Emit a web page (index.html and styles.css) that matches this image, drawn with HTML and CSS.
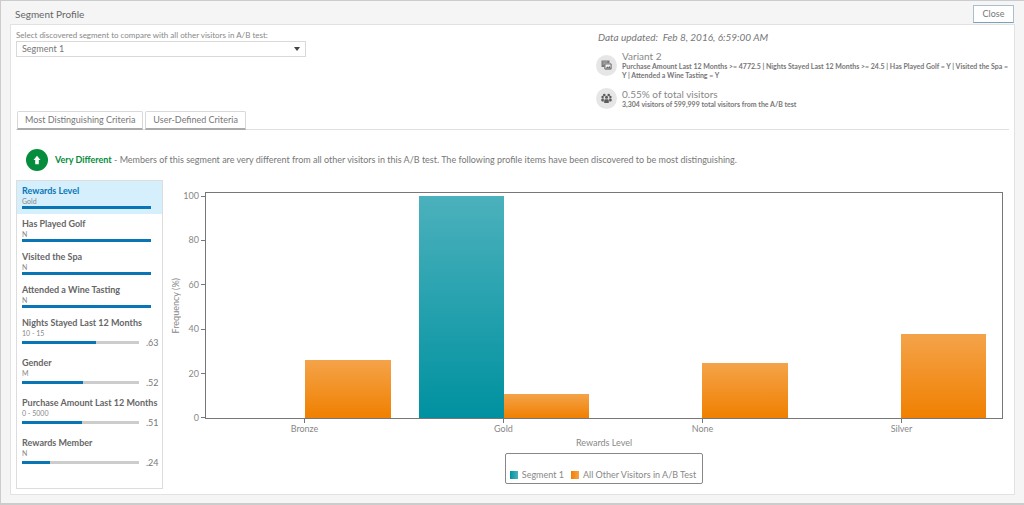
FILE: index.html
```html
<!DOCTYPE html>
<html lang="en">
<head>
<meta charset="utf-8">
<title>Segment Profile</title>
<link rel="stylesheet" href="styles.css">
</head>
<body>
<div class="dialog">
  <header class="dialog-header">
    <h1 class="dialog-title">Segment Profile</h1>
    <button class="close-button" type="button">Close</button>
  </header>
  <main class="panel">
    <section class="summary">
      <div class="picker">
        <label class="picker-label" for="segment">Select discovered segment to compare with all other visitors in A/B test:</label>
        <div class="select-wrap">
          <select class="select" id="segment"><option>Segment 1</option></select>
          <svg class="caret" viewBox="0 0 6 4" aria-hidden="true"><path d="M0 0h6L3 4z"/></svg>
        </div>
      </div>
      <div class="details">
        <p class="updated">Data updated:&nbsp; Feb 8, 2016, 6:59:00 AM</p>
        <div class="detail">
          <svg class="detail-icon" viewBox="0 0 21 21" aria-hidden="true">
            <circle cx="10.500" cy="10.500" r="10.500" fill="#e6e6e6"/>
            <path d="M5.500 5.500h8v2.500h-5v4h-3z" fill="#777"/>
            <path d="M6.500 7h5M6.500 9h2" stroke="#ccc" stroke-width=".7"/>
            <path d="M8.900 8.900h6.200v5.200H8.900z" fill="#eee" stroke="#666"/>
            <path d="M9.500 13.500l1.800-2 1 1 1.200-1.500 1.300 2.500z" fill="#666"/>
          </svg>
          <div>
            <h2 class="detail-title">Variant 2</h2>
            <p class="detail-text">Purchase Amount Last 12 Months &gt;= 4772.5 | Nights Stayed Last 12 Months &gt;= 24.5 | Has Played Golf = Y | Visited the Spa = Y | Attended a Wine Tasting = Y</p>
          </div>
        </div>
        <div class="detail">
          <svg class="detail-icon" viewBox="0 0 21 21" aria-hidden="true">
            <circle cx="10.500" cy="10.500" r="10.500" fill="#e6e6e6"/>
            <g fill="#5c5c5c">
              <circle cx="8.300" cy="7" r="1.300"/><circle cx="12.700" cy="7" r="1.300"/>
              <circle cx="6.600" cy="9" r="1.200"/><circle cx="14.400" cy="9" r="1.200"/>
              <circle cx="10.500" cy="9.300" r="1.500"/>
              <path d="M5.300 12.800v-1.300q0-1 1.200-1h1.300v3H6zM15.700 12.800v-1.300q0-1-1.200-1h-1.300v3H15zM8.200 15v-2.600q0-1.200 1.300-1.200h2q1.300 0 1.300 1.200V15z"/>
            </g>
          </svg>
          <div>
            <h2 class="detail-title">0.55% of total visitors</h2>
            <p class="detail-text">3,304 visitors of 599,999 total visitors from the A/B test</p>
          </div>
        </div>
      </div>
    </section>

    <div class="tabs" role="tablist">
      <button class="tab" type="button" role="tab" aria-selected="true">Most Distinguishing Criteria</button>
      <button class="tab" type="button" role="tab" aria-selected="false">User-Defined Criteria</button>
    </div>

    <div class="verdict">
      <svg class="verdict-icon" viewBox="0 0 22 22" aria-hidden="true">
        <circle cx="11" cy="11" r="11" fill="#058c3c"/>
        <path d="M11 6.800l3.500 4.200h-1.700v4.200H9.200V11H7.500z" fill="#fff"/>
      </svg>
      <p class="verdict-text"><strong>Very Different</strong> - Members of this segment are very different from all other visitors in this A/B test. The following profile items have been discovered to be most distinguishing.</p>
    </div>

    <section class="content">
      <nav class="criteria" aria-label="Profile items">
        <button class="item selected" type="button"><span class="item-name">Rewards Level</span><span class="item-value">Gold</span><span class="meter"><span class="track"><span class="fill" style="width:100%"></span></span></span></button>
        <button class="item" type="button"><span class="item-name">Has Played Golf</span><span class="item-value">N</span><span class="meter"><span class="track"><span class="fill" style="width:100%"></span></span></span></button>
        <button class="item" type="button"><span class="item-name">Visited the Spa</span><span class="item-value">N</span><span class="meter"><span class="track"><span class="fill" style="width:100%"></span></span></span></button>
        <button class="item" type="button"><span class="item-name">Attended a Wine Tasting</span><span class="item-value">N</span><span class="meter"><span class="track"><span class="fill" style="width:100%"></span></span></span></button>
        <button class="item scored" type="button"><span class="item-name">Nights Stayed Last 12 Months</span><span class="item-value">10 - 15</span><span class="meter"><span class="track"><span class="fill" style="width:63%"></span></span><span class="score">.63</span></span></button>
        <button class="item scored" type="button"><span class="item-name">Gender</span><span class="item-value">M</span><span class="meter"><span class="track"><span class="fill" style="width:52%"></span></span><span class="score">.52</span></span></button>
        <button class="item scored" type="button"><span class="item-name">Purchase Amount Last 12 Months</span><span class="item-value">0 - 5000</span><span class="meter"><span class="track"><span class="fill" style="width:51%"></span></span><span class="score">.51</span></span></button>
        <button class="item scored" type="button"><span class="item-name">Rewards Member</span><span class="item-value">N</span><span class="meter"><span class="track"><span class="fill" style="width:24%"></span></span><span class="score">.24</span></span></button>
      </nav>

      <div class="chart">
        <div class="y-title">Frequency (%)</div>
        <div class="y-axis">
          <span class="y-tick">100</span><span class="y-tick">80</span><span class="y-tick">60</span><span class="y-tick">40</span><span class="y-tick">20</span><span class="y-tick">0</span>
        </div>
        <div class="plot">
          <div class="group"><span class="bar teal" style="height:0%"></span><span class="bar orange" style="height:26.3%"></span></div>
          <div class="group"><span class="bar teal" style="height:100%"></span><span class="bar orange" style="height:10.8%"></span></div>
          <div class="group"><span class="bar teal" style="height:0%"></span><span class="bar orange" style="height:25%"></span></div>
          <div class="group"><span class="bar teal" style="height:0%"></span><span class="bar orange" style="height:37.8%"></span></div>
        </div>
        <div class="x-axis">
          <span class="x-tick">Bronze</span><span class="x-tick">Gold</span><span class="x-tick">None</span><span class="x-tick">Silver</span>
        </div>
        <div class="x-title">Rewards Level</div>
        <div class="legend">
          <span class="key"><span class="swatch teal"></span>Segment 1</span>
          <span class="key"><span class="swatch orange"></span>All Other Visitors in A/B Test</span>
        </div>
      </div>
    </section>
  </main>
</div>
</body>
</html>
```

FILE: styles.css
```css
* { box-sizing: border-box; }

body {
  margin: 0;
  background: #fff;
  color: #777;
  font: 9px/12px Lato, "Open Sans", sans-serif;
}

h1, h2, p { margin: 0; font-weight: 400; }

button, select {
  margin: 0;
  font: inherit;
  color: inherit;
  border-radius: 0;
}

.dialog {
  display: flex;
  flex-direction: column;
  min-height: 100vh;
  padding: 4px 9px 8px;
  background: #f5f5f5;
  border: 1px solid #ccc;
  border-bottom-width: 2px;
  border-right: 0;
}

.dialog-header {
  display: flex;
  align-items: center;
  justify-content: space-between;
  height: 19px;
  padding: 0 1px 2px 5px;
}

.dialog-title { font-size: 10px; color: #666; }

.close-button {
  width: 41px;
  height: 18px;
  padding: 0;
  background: #fff;
  border: 1px solid #a9bfce;
  border-bottom-color: #7fa0b5;
}

.panel {
  flex: 1;
  display: flex;
  flex-direction: column;
  padding: 4px 5px 5px;
  background: #fff;
  border: 1px solid #e2e2e2;
}

.summary {
  display: flex;
  justify-content: space-between;
  min-height: 82px;
}

.picker { width: 290px; }

.picker-label { display: block; font-size: 8px; color: #888; }

.select-wrap { position: relative; }

.select {
  display: block;
  width: 100%;
  height: 16px;
  padding: 0 5px;
  appearance: none;
  background: #fff;
  border: 1px solid #d9d9d9;
}

.caret {
  position: absolute;
  top: 6px;
  right: 6px;
  width: 6px;
  height: 4px;
  fill: #444;
}

.details { width: 413px; padding-top: 2px; }

.updated {
  padding-left: 2px;
  font-size: 10px;
  font-style: italic;
}

.detail {
  display: flex;
  align-items: center;
  gap: 5px;
}

.updated + .detail { margin: 8px 0; }

.detail-icon { flex: none; width: 21px; height: 21px; }

.detail-title { font-size: 10px; line-height: 11px; color: #888; }

.detail-text { font-size: 7px; line-height: 9px; font-weight: 700; }

.tabs {
  display: flex;
  gap: 2px;
  padding-left: 1px;
  border-bottom: 1px solid #e0e0e0;
}

.tab {
  height: 19px;
  margin-bottom: -1px;
  padding: 0 7px;
  background: #fff;
  border: 1px solid #d9d9d9;
  border-bottom: 2px solid #aaa;
  border-radius: 2px 2px 0 0;
}

.verdict {
  display: flex;
  align-items: center;
  gap: 7px;
  padding: 19px 10px 9px;
}

.verdict-icon { flex: none; width: 22px; height: 22px; }

.verdict-text strong { color: #058c3c; }

.content { flex: 1; display: flex; gap: 7px; }

.criteria { width: 147px; flex: none; border: 1px solid #ddd; }

.item {
  display: block;
  width: 100%;
  padding: 3px 11px 5px 5px;
  text-align: left;
  background: none;
  border: 0;
}

.item.selected { background: #d5effd; }

.item-name {
  display: block;
  line-height: 13px;
  font-weight: 700;
  color: #666;
  white-space: nowrap;
}

.selected .item-name { color: #0975b5; }

.item-value { display: block; font-size: 7px; line-height: 9px; color: #888; }

.meter { display: flex; align-items: center; gap: 7px; }

.track { flex: 1; height: 3px; background: #ccc; }

.fill { display: block; height: 3px; background: #0975b5; }

.item.scored { padding: 3px 4px 6px 5px; }

.scored .meter { height: 9px; }

.score { width: 12px; }

.chart {
  flex: 1;
  display: grid;
  grid-template-columns: 13px 22px 1fr;
  grid-template-rows: 1fr auto auto auto;
  padding: 12px 6px 5px 0;
  color: #888;
}

.y-title {
  align-self: center;
  justify-self: start;
  writing-mode: vertical-rl;
  transform: rotate(180deg);
}

.y-axis {
  display: flex;
  flex-direction: column;
  justify-content: space-between;
  padding-top: 4px;
  padding-bottom: 1px;
}

.y-tick {
  display: flex;
  align-items: center;
  justify-content: flex-end;
  gap: 2px;
  height: 0;
}

.y-tick::after { content: ""; width: 4px; height: 1px; background: #777; }

.plot {
  display: grid;
  grid-template-columns: repeat(4, 1fr);
  padding: 3px 2px 0 0;
  border: 1px solid #777;
}

.group {
  display: flex;
  align-items: flex-end;
  padding: 0 14px;
}

.bar { flex: 1; }

.teal { background: linear-gradient(#4bb1bc, #0091a0); }
.orange { background: linear-gradient(#f4a34a, #f08000); }

.swatch.teal { background: linear-gradient(90deg, #0091a0, #4bb1bc); }
.swatch.orange { background: linear-gradient(90deg, #f08000, #f4a34a); }

.x-axis {
  grid-column: 3;
  display: grid;
  grid-template-columns: repeat(4, 1fr);
  padding-right: 2px;
}

.x-tick {
  display: flex;
  flex-direction: column;
  align-items: center;
}

.x-tick::before { content: ""; width: 1px; height: 4px; background: #777; }

.x-title { grid-column: 3; padding: 2px 0 4px; text-align: center; }

.legend {
  grid-column: 3;
  justify-self: center;
  display: flex;
  gap: 7px;
  padding: 15px 6px 2px 4px;
  border: 1px solid #888;
  border-radius: 2px;
}

.key { display: flex; align-items: center; gap: 4px; }

.swatch { width: 8px; height: 8px; }
```
